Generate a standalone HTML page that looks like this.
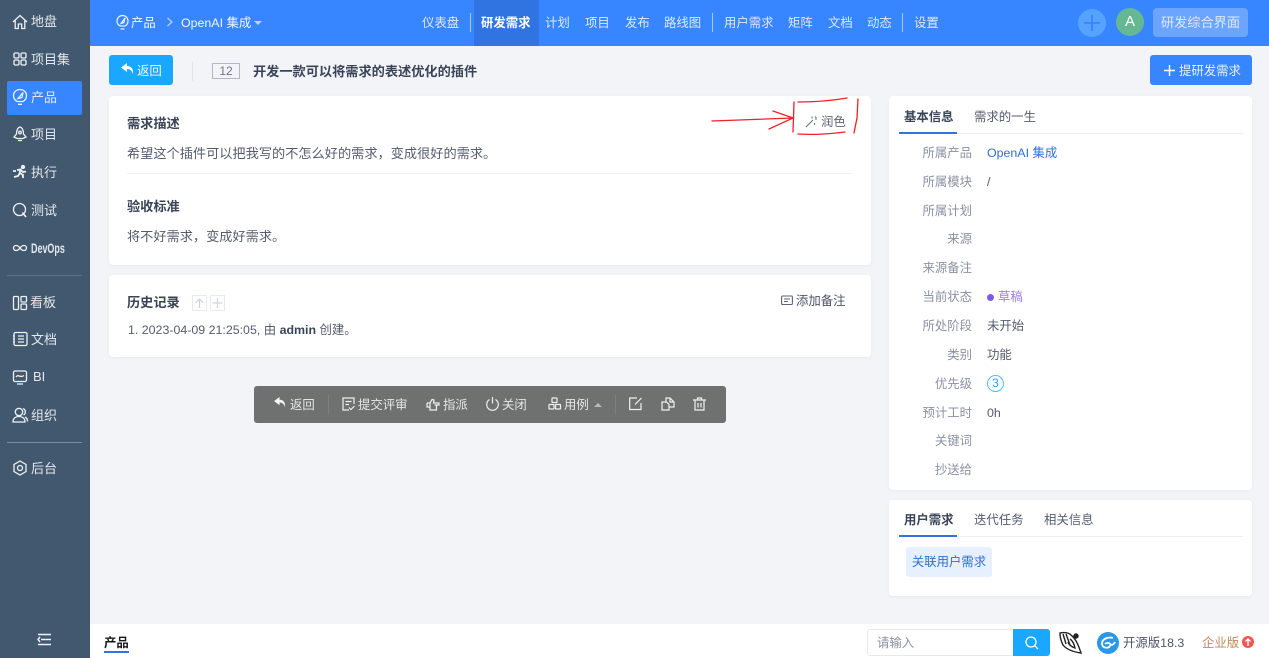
<!DOCTYPE html>
<html lang="zh">
<head>
<meta charset="utf-8">
<title>开发一款可以将需求的表述优化的插件</title>
<style>
*{box-sizing:border-box}
html,body{margin:0;padding:0;width:1269px;height:658px;overflow:hidden;background:#f3f4f7;font-family:"Liberation Sans","Noto Sans CJK SC",sans-serif;font-size:12.4px;color:#555c6e}
.t{position:absolute;white-space:nowrap;line-height:20px;height:20px}
.abs{position:absolute}
svg{position:absolute;overflow:visible}
#side{position:absolute;left:0;top:0;width:90px;height:658px;background:#42586f}
#side .t{color:#e4e8ec;left:31px;font-size:13px}
#side svg{left:12px;width:16px;height:16px;fill:none;stroke:#eef1f4;stroke-width:1.300}
#head{position:absolute;left:90px;top:0;width:1179px;height:46px;background:#3785ff}
.n{color:#dde9ff;top:13px}
.card{position:absolute;background:#fff;border-radius:4px;box-shadow:0 1px 3px rgba(40,60,90,.06)}
.h{font-weight:700;color:#3a4458}
.big{font-size:13.2px}
.lb{color:#8b91a3;text-align:right;width:60px;left:912px}
.v{left:987px;color:#555c6e}
.tb{color:#e6e7e7;top:395px}
#bar svg{fill:none;stroke:#f0f0f0;stroke-width:1.200}
</style>
</head>
<body>
<div id="side">
<div class="abs" style="left:7px;top:81px;width:75px;height:34px;background:#3785ff;border-radius:2px"></div>
<svg style="top:14px" viewBox="0 0 16 16"><path d="M1 8 8 1.500 15 8M3.200 6.500V14.500H6.300V10H9.700V14.500H12.800V6.500"/></svg><div class="t" style="top:12px">地盘</div>
<svg style="top:51px" viewBox="0 0 16 16"><rect x="2" y="2" width="5" height="5" rx="1.200"/><rect x="9" y="2" width="5" height="5" rx="1.200"/><rect x="2" y="9" width="5" height="5" rx="1.200"/><rect x="9" y="9" width="5" height="5" rx="1.200"/></svg><div class="t" style="top:50px">项目集</div>
<svg style="top:89px" viewBox="0 0 16 16"><path d="M5 12.500C2.500 11 1.500 9 1.500 6.500A6.500 6 0 0 1 14.500 6.500C14.500 9 13.500 11 11 12.500ZM6 15.300H10M6 9.500 11 3.500 10 8.500Z"/></svg><div class="t" style="top:88px">产品</div>
<svg style="top:126px" viewBox="0 0 16 16"><path d="M8 1C5 2 4.500 5 4.500 8L2 11 5 12.500H11L14 11 11.500 8C11.500 5 11 2 8 1Z"/><circle cx="8" cy="6.500" r="1.300"/><path d="M6 14.500H10"/></svg><div class="t" style="top:125px">项目</div>
<svg style="top:164px" viewBox="0 0 16 16"><circle cx="11" cy="3" r="1.500" fill="#eef1f4"/><path d="M2 13 6 12 8 9 11 11V14M5 6 8.500 5.500 7.500 9M9 6 11 8 14 7.500M1 7H4" stroke-width="1.800"/></svg><div class="t" style="top:163px">执行</div>
<svg style="top:202px" viewBox="0 0 16 16"><circle cx="7.500" cy="7.500" r="6"/><path d="M10.500 10.500 14 15" stroke-width="1.600"/></svg><div class="t" style="top:201px">测试</div>
<svg style="top:240px" viewBox="0 0 16 16"><path d="M8 8C6.500 5.800 5.500 5.500 4 5.500A2.500 2.500 0 0 0 4 10.500C5.500 10.500 6.500 10.200 8 8C9.500 5.800 10.500 5.500 12 5.500A2.500 2.500 0 0 1 12 10.500C10.500 10.500 9.500 10.200 8 8Z"/></svg><div class="t" style="top:238px;font-weight:700;transform:scaleX(.64);transform-origin:0 50%;font-size:14px">DevOps</div>
<div class="abs" style="left:7px;top:275px;width:75px;height:1px;background:#5c7288"></div>
<svg style="top:295px" viewBox="0 0 16 16"><rect x="1.500" y="1.500" width="5" height="13" rx="1"/><rect x="9" y="1.500" width="5.500" height="5.500" rx="1"/><rect x="9" y="9" width="5.500" height="5.500" rx="1"/></svg><div class="t" style="top:293px;left:30px">看板</div>
<svg style="top:331px" viewBox="0 0 16 16"><rect x="2" y="1.500" width="13" height="13" rx="1.500"/><path d="M6 5H12M6 8H12M6 11H12M1 5H3M1 8H3M1 11H3"/></svg><div class="t" style="top:330px">文档</div>
<svg style="top:369px" viewBox="0 0 16 16"><rect x="1.500" y="2" width="13" height="10.500" rx="1.500"/><path d="M4 8C6 4.500 8 9.500 12 6.500M5 15H11"/></svg><div class="t" style="top:367px;left:33px">BI</div>
<svg style="top:407px" viewBox="0 0 16 16"><circle cx="7" cy="5" r="3.700"/><path d="M1 15C1 11 4 9.500 7 9.500S13 11 13 15ZM11 1.500C14 2.500 14 7 11.500 8M13 10C15 11 15.500 13 15.500 14.500"/></svg><div class="t" style="top:406px">组织</div>
<div class="abs" style="left:7px;top:442px;width:75px;height:1px;background:#7a8d9f"></div>
<svg style="top:460px" viewBox="0 0 16 16"><path d="M8 1 14 4.500V11.500L8 15 2 11.500V4.500Z"/><circle cx="8" cy="8" r="2.500"/></svg><div class="t" style="top:459px">后台</div>
<svg style="top:632px;left:37px" viewBox="0 0 16 16"><path d="M1 2.500H14M4 7.500H14M1 12.500H14M3 5 1 7.500 3 10" stroke-width="1.500"/></svg>
</div>

<div id="head"></div>
<svg style="left:116px;top:15px;width:13px;height:15px;fill:none;stroke:#eaf1ff;stroke-width:1.200" viewBox="0 0 13 15"><path d="M4 11C2 10 1 8 1 6A5.500 5.500 0 0 1 12 6C12 8 11 10 9 11ZM4.500 14H8.500M5 8.500 9 3 8 7.500Z"/></svg>
<div class="t n" style="left:131px;color:#f2f6ff">产品</div>
<svg style="left:166px;top:17px;width:8px;height:10px;fill:none;stroke:#bcd4ff;stroke-width:1.200" viewBox="0 0 8 10"><path d="M1.500 1 6 5 1.500 9"/></svg>
<div class="t n" style="left:181px;color:#f2f6ff">OpenAI 集成</div>
<div class="abs" style="left:254px;top:21px;border:4px solid transparent;border-top-color:#bcd4ff;border-bottom:0"></div>

<div class="t n" style="left:422px">仪表盘</div>
<div class="abs" style="left:470px;top:13px;width:1px;height:19px;background:#a8c8ff"></div>
<div class="abs" style="left:474px;top:0;width:65px;height:46px;background:#2f74e0"></div>
<div class="t n" style="left:481px;color:#fff;font-weight:700">研发需求</div>
<div class="t n" style="left:545px">计划</div>
<div class="t n" style="left:585px">项目</div>
<div class="t n" style="left:625px">发布</div>
<div class="t n" style="left:664px">路线图</div>
<div class="abs" style="left:712px;top:13px;width:1px;height:19px;background:#a8c8ff"></div>
<div class="t n" style="left:724px">用户需求</div>
<div class="t n" style="left:788px">矩阵</div>
<div class="t n" style="left:828px">文档</div>
<div class="t n" style="left:867px">动态</div>
<div class="abs" style="left:902px;top:13px;width:1px;height:19px;background:#a8c8ff"></div>
<div class="t n" style="left:914px">设置</div>

<div class="abs" style="left:1078px;top:9px;width:28px;height:28px;border-radius:50%;background:#56a2ff"></div>
<svg style="left:1084px;top:15px;width:16px;height:16px;fill:none;stroke:#3785ff;stroke-width:1.800" viewBox="0 0 16 16"><path d="M8 0V16M0 8H16"/></svg>
<div class="abs" style="left:1116px;top:8px;width:28px;height:28px;border-radius:50%;background:#66b892;color:#fff;text-align:center;line-height:28px;font-size:15px">A</div>
<div class="abs" style="left:1153px;top:8px;width:95px;height:29px;border-radius:4px;background:#6ba5ff;color:#dde9ff;text-align:center;line-height:29px;font-size:13.200px">研发综合界面</div>

<div class="abs" style="left:109px;top:55px;width:64px;height:30px;border-radius:3px;background:#1aa7ff"></div>
<svg style="left:121px;top:63px;width:13px;height:12px;fill:#fff" viewBox="0 0 13 12"><path d="M6 0 0 4.500 6 9V6C9 6 10.800 7.500 12 11 12.500 5.500 10 3 6 3Z"/></svg>
<div class="t" style="left:137px;top:61px;color:#f0f8ff">返回</div>
<div class="abs" style="left:192px;top:62px;width:1px;height:19px;background:#e2e4ea"></div>
<div class="abs" style="left:212px;top:63px;width:28px;height:16px;border:1px solid #b4b8c4;border-bottom-width:1.500px;color:#70778a;text-align:center;line-height:14px;font-size:12px">12</div>
<div class="t h big" style="left:253px;top:62px">开发一款可以将需求的表述优化的插件</div>
<div class="abs" style="left:1150px;top:55px;width:102px;height:30px;border-radius:3px;background:#3785ff"></div>
<svg style="left:1164px;top:65px;width:11px;height:11px;fill:none;stroke:#fff;stroke-width:1.400" viewBox="0 0 11 11"><path d="M5.500 0V11M0 5.500H11"/></svg>
<div class="t" style="left:1179px;top:61px;color:#e8f0ff">提研发需求</div>

<div class="card" style="left:109px;top:96px;width:762px;height:169px"></div>
<div class="t h big" style="left:127px;top:114px">需求描述</div>
<div class="t big" style="left:127px;top:144px">希望这个插件可以把我写的不怎么好的需求，变成很好的需求。</div>
<div class="abs" style="left:127px;top:173px;width:725px;height:1px;background:#f0f1f4"></div>
<div class="t h big" style="left:127px;top:197px">验收标准</div>
<div class="t big" style="left:127px;top:227px">将不好需求，变成好需求。</div>
<svg style="left:805px;top:115px;width:13px;height:13px;fill:none;stroke:#6b7283;stroke-width:1.100" viewBox="0 0 13 13"><path d="M1 12 8 5M7 1.500V3.500M11 3V5M9.500 8V10M10 1.500 11.500 3"/></svg>
<div class="t" style="left:821px;top:112px;color:#5e6579">润色</div>
<svg style="left:0;top:0;width:1269px;height:658px;fill:none;stroke:#ee2028;stroke-width:1.300;stroke-linecap:round" viewBox="0 0 1269 658"><path d="M712 121 793 118M773 111 793 118 769 129M794 102 793 132M798 102C815 102 830 101 847 98M798 134C815 135 830 134 845 132M858 99 857 118 854 133"/></svg>

<div class="card" style="left:109px;top:275px;width:762px;height:82px"></div>
<div class="t h big" style="left:127px;top:293px">历史记录</div>
<div class="abs" style="left:192px;top:295px;width:15px;height:16px;border:1px solid #e8eaf0"></div>
<svg style="left:195px;top:298px;width:9px;height:10px;fill:none;stroke:#cfd3dd;stroke-width:1.200" viewBox="0 0 9 10"><path d="M4.500 10V1M.5 5 4.500 1 8.500 5"/></svg>
<div class="abs" style="left:210px;top:295px;width:15px;height:16px;border:1px solid #e8eaf0"></div>
<svg style="left:212px;top:298px;width:11px;height:10px;fill:none;stroke:#cfd3dd;stroke-width:1.200" viewBox="0 0 11 10"><path d="M5.500 0V10M.5 5H10.500"/></svg>
<div class="t" style="left:128px;top:320px">1. 2023-04-09 21:25:05, 由 <b style="color:#3a4458">admin</b> 创建。</div>
<svg style="left:781px;top:295px;width:12px;height:11px;fill:none;stroke:#5e6579;stroke-width:1.100" viewBox="0 0 12 11"><rect x=".6" y="1" width="10.800" height="8.500" rx="1"/><path d="M3 4H9M3 6.500H7"/></svg>
<div class="t" style="left:796px;top:291px;color:#4e5568">添加备注</div>

<div id="bar">
<div class="abs" style="left:254px;top:386px;width:472px;height:37px;border-radius:3px;background:#6f7170"></div>
<svg style="left:274px;top:397px;width:12px;height:11px;fill:#f5f5f5;stroke:none" viewBox="0 0 13 12"><path d="M6 0 0 4.500 6 9V6C9 6 10.800 7.500 12 11 12.500 5.500 10 3 6 3Z" style="stroke:none;fill:#f5f5f5"/></svg>
<div class="t tb" style="left:290px">返回</div>
<div class="abs" style="left:328px;top:394px;width:1px;height:21px;background:#7d7f7e"></div>
<svg style="left:342px;top:397px;width:13px;height:14px" viewBox="0 0 13 14"><path d="M12 7V1H1V13H7M3.500 4.500H9.500M3.500 7.500H7M7 10.500 9 12.500 12.500 9"/></svg>
<div class="t tb" style="left:358px">提交评审</div>
<svg style="left:426px;top:398px;width:14px;height:13px" viewBox="0 0 14 13"><path d="M1 5H4L6 1.500 8 2 7.500 5H13V7H8.500M1 5V9H4M4 5V12H10.500V7.500"/></svg>
<div class="t tb" style="left:443px">指派</div>
<svg style="left:486px;top:397px;width:13px;height:14px" viewBox="0 0 13 14"><path d="M3.500 2.500A5.800 5.800 0 1 0 9.500 2.500M6.500 0V6.500"/></svg>
<div class="t tb" style="left:502px">关闭</div>
<svg style="left:548px;top:397px;width:13px;height:13px" viewBox="0 0 13 13"><rect x="4" y="1" width="5" height="4.500" rx=".5"/><rect x="1" y="7.500" width="5" height="4.500" rx=".5"/><rect x="7.500" y="7.500" width="5" height="4.500" rx=".5"/></svg>
<div class="t tb" style="left:564px">用例</div>
<div class="abs" style="left:594px;top:403px;border:4px solid transparent;border-bottom-color:#b9bbba;border-top:0"></div>
<div class="abs" style="left:615px;top:394px;width:1px;height:21px;background:#7d7f7e"></div>
<svg style="left:629px;top:397px;width:13px;height:13px" viewBox="0 0 13 13"><path d="M12 6V12.500H.7V1H8M12.500 1 6 7.500"/></svg>
<svg style="left:661px;top:397px;width:14px;height:14px" viewBox="0 0 14 14"><path d="M1 5H5.500L8 7.500V13H1ZM5 5V1H9L13 5V10H8M9 1V5H13"/></svg>
<svg style="left:693px;top:397px;width:13px;height:14px" viewBox="0 0 13 14"><path d="M0 3H13M4.500 3V1H8.500V3M2 3V13H11V3M5 6V10.500M8 6V10.500"/></svg>
</div>

<div class="card" style="left:889px;top:96px;width:363px;height:394px"></div>
<div class="abs" style="left:899px;top:133px;width:344px;height:1px;background:#eceef2"></div>
<div class="abs" style="left:899px;top:132px;width:58px;height:2px;background:#2f74e0"></div>
<div class="t h" style="left:904px;top:107px">基本信息</div>
<div class="t" style="left:974px;top:107px">需求的一生</div>
<div class="t lb" style="top:143px">所属产品</div><div class="t v" style="top:143px;color:#2d6fd2">OpenAI 集成</div>
<div class="t lb" style="top:172px">所属模块</div><div class="t v" style="top:172px">/</div>
<div class="t lb" style="top:201px">所属计划</div>
<div class="t lb" style="top:229px">来源</div>
<div class="t lb" style="top:258px">来源备注</div>
<div class="t lb" style="top:287px">当前状态</div>
<div class="abs" style="left:987px;top:294px;width:7px;height:7px;border-radius:50%;background:#7a5ce6"></div><div class="t" style="left:998px;top:287px;color:#9a7ff0">草稿</div>
<div class="t lb" style="top:316px">所处阶段</div><div class="t v" style="top:316px">未开始</div>
<div class="t lb" style="top:345px">类别</div><div class="t v" style="top:345px">功能</div>
<div class="t lb" style="top:374px">优先级</div>
<div class="abs" style="left:987px;top:375px;width:17px;height:17px;border:1px solid #55b8ff;border-radius:50%;color:#2f9fee;text-align:center;line-height:15px;font-size:12px">3</div>
<div class="t lb" style="top:403px">预计工时</div><div class="t v" style="top:403px">0h</div>
<div class="t lb" style="top:431px">关键词</div>
<div class="t lb" style="top:460px">抄送给</div>

<div class="card" style="left:889px;top:500px;width:363px;height:96px"></div>
<div class="abs" style="left:899px;top:536px;width:344px;height:1px;background:#eceef2"></div>
<div class="abs" style="left:899px;top:535px;width:58px;height:2px;background:#2f74e0"></div>
<div class="t h" style="left:904px;top:510px">用户需求</div>
<div class="t" style="left:974px;top:510px">迭代任务</div>
<div class="t" style="left:1044px;top:510px">相关信息</div>
<div class="abs" style="left:906px;top:547px;width:86px;height:30px;border-radius:3px;background:#e6f0ff;color:#2d6fd2;text-align:center;line-height:30px">关联用户需求</div>

<div class="abs" style="left:90px;top:624px;width:1179px;height:34px;background:#fff"></div>
<div class="t h" style="left:104px;top:633px;color:#16181d">产品</div>
<div class="abs" style="left:104px;top:651px;width:25px;height:2px;background:#2f74e0"></div>
<div class="abs" style="left:867px;top:629px;width:147px;height:27px;border:1px solid #e6e8ee;border-radius:3px 0 0 3px;background:#fff"></div>
<div class="t" style="left:877px;top:633px;color:#8a90a0">请输入</div>
<div class="abs" style="left:1013px;top:629px;width:37px;height:27px;background:#1aa7ff;border-radius:0 3px 3px 0"></div>
<svg style="left:1025px;top:636px;width:14px;height:14px;fill:none;stroke:#fff;stroke-width:1.300" viewBox="0 0 14 14"><circle cx="6" cy="6" r="5"/><path d="M9.500 9.500 13 13"/></svg>
<svg style="left:1059px;top:631px;width:24px;height:24px;fill:none;stroke:#222;stroke-width:1.400" viewBox="0 0 24 24"><path d="M1 2C6 1 11 2 14 6 18 10 20 16 22 22 15 21 8 19 4 14 2 10 1 6 1 2ZM4 3 7 13M7 3 11 14M11 8C14 10 15 13 16 17 13 16 10 14 9 11"/><circle cx="17" cy="5" r="2" fill="#222"/></svg>
<div class="abs" style="left:1097px;top:632px;width:22px;height:22px;border-radius:50%;background:#2a98e8"></div>
<svg style="left:1100px;top:636px;width:16px;height:14px;fill:none;stroke:#fff;stroke-width:1.800" viewBox="0 0 16 14"><path d="M13 2C8 .5 2 3 2 7.500S8 13 10 10 7 6 5 8M15 6C14 8 13 9 11 9"/></svg>
<div class="t" style="left:1123px;top:633px;color:#4e5568">开源版18.3</div>
<div class="t" style="left:1202px;top:633px;color:#bf8a5c">企业版</div>
<div class="abs" style="left:1242px;top:636px;width:12px;height:12px;border-radius:50%;background:#f4574f"></div>
<svg style="left:1245px;top:638px;width:6px;height:8px;fill:none;stroke:#fff;stroke-width:1.400" viewBox="0 0 6 8"><path d="M3 8V1M.5 3.500 3 1 5.500 3.500"/></svg>
</body>
</html>
